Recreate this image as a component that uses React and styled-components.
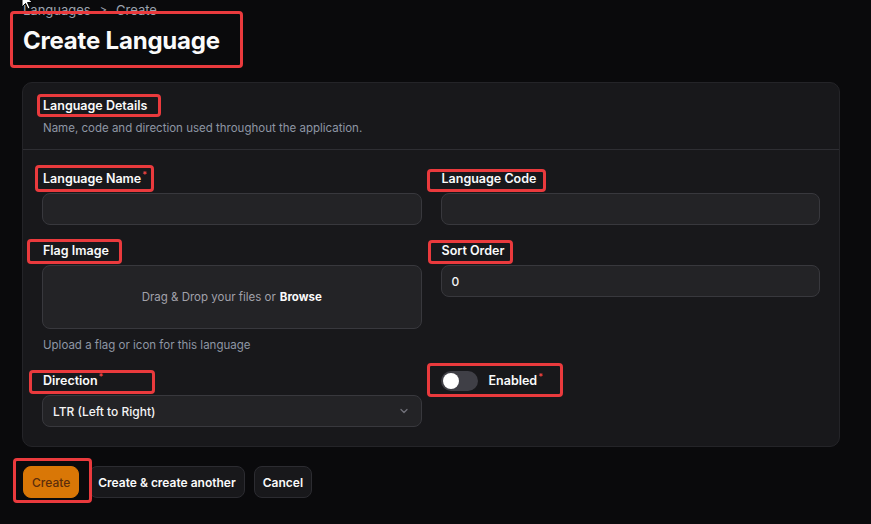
import React from 'react'
import styled, { createGlobalStyle } from 'styled-components'

const GlobalStyle = createGlobalStyle`
  html {
    overflow: hidden;
  }
  body {
    margin: 0;
    background: #0a0a0c;
    font-family: Inter, "Liberation Sans", sans-serif;
    color: #fafafa;
  }
`

const Page = styled.div`
  position: relative;
  padding: 0 31px 30px 22px;
`

const Cursor = styled.svg`
  position: absolute;
  left: 21px;
  top: -7px;
`

const Crumbs = styled.div`
  display: flex;
  align-items: center;
  gap: 9px;
  margin-left: 1px;
  height: 22px;
  margin-top: -1px;
  font-size: 13px;
  color: #9ca3af;
`

const Mark = styled.span`
  position: relative;
  display: inline-flex;
  &::after {
    content: '';
    position: absolute;
    top: ${p => p.$t}px;
    right: ${p => p.$r}px;
    bottom: ${p => p.$b}px;
    left: ${p => p.$l}px;
    border: 3px solid #ea3a3d;
    border-radius: 4px;
    pointer-events: none;
  }
`

const Title = styled.h1`
  margin: 5px 0 0 1px;
  font-size: 24px;
  line-height: 30px;
  font-weight: 700;
  letter-spacing: -0.2px;
`

const Card = styled.section`
  margin-top: 26px;
  background: #18181b;
  border: 1px solid #242428;
  border-radius: 10px;
`

const CardHead = styled.div`
  padding: 13px 20px 12px;
  border-bottom: 1px solid #2e2e33;
`

const CardTitle = styled.h2`
  margin: 0;
  font-size: 12.5px;
  line-height: 20px;
  font-weight: 600;
`

const Sub = styled.p`
  margin: 3px 0 0;
  font-size: 11.5px;
  line-height: 18px;
  color: #8e96a4;
`

const Grid = styled.div`
  display: grid;
  grid-template-columns: 1fr 1fr;
  column-gap: 19px;
  row-gap: 16px;
  padding: 19px 19px 19px 19px;
`

const Field = styled.div`
  display: flex;
  flex-direction: column;
  align-items: ${p => (p.$inline ? 'flex-start' : 'stretch')};
  gap: 4px;
`

const Label = styled.label`
  font-size: 12.5px;
  line-height: 20px;
  font-weight: 600;
  color: #fafafa;
  align-self: flex-start;
  margin-left: 1px;
`

const Req = styled.sup`
  color: #ef4444;
  font-size: 9px;
  margin-left: 1px;
  vertical-align: top;
  line-height: 12px;
`

const Input = styled.div`
  height: 30px;
  background: #232326;
  border: 1px solid #38383d;
  border-radius: 8px;
  display: flex;
  align-items: center;
  justify-content: space-between;
  padding: 0 11px 0 10px;
  font-size: 12px;
  font-weight: 500;
  color: #f4f4f5;
`

const Drop = styled.div`
  height: 62px;
  background: #232326;
  border: 1px solid #38383d;
  border-radius: 8px;
  display: flex;
  align-items: center;
  justify-content: center;
  font-size: 11.5px;
  color: #a1a1aa;
  b { color: #fafafa; font-weight: 700; margin-left: 4px; }
`

const Help = styled.div`
  margin-top: 2px;
  font-size: 11.5px;
  line-height: 20px;
  color: #8e96a4;
  margin-left: 1px;
`

const ToggleRow = styled.div`
  display: flex;
  align-items: center;
  gap: 10px;
  height: 20px;
`

const Track = styled.span`
  width: 37px;
  height: 20px;
  border-radius: 10px;
  background: #3f3f46;
  display: flex;
  align-items: center;
  padding: 2px;
  box-sizing: border-box;
  &::before {
    content: '';
    width: 16px;
    height: 16px;
    border-radius: 50%;
    background: #fff;
  }
`

const Actions = styled.div`
  display: flex;
  align-items: center;
  gap: 9px;
  margin: 19px 0 0 1px;
`

const Button = styled.button`
  height: 32px;
  padding: 0 ${p => (p.$primary ? 8 : 8)}px;
  border-radius: 8px;
  font-family: inherit;
  font-size: 12px;
  font-weight: ${p => (p.$primary ? 500 : 600)};
  background: ${p => (p.$primary ? '#d97706' : '#18181b')};
  color: ${p => (p.$primary ? '#5c2d0b' : '#fafafa')};
  border: 1px solid ${p => (p.$primary ? '#d97706' : '#2c2c31')};
  margin-right: ${p => (p.$primary ? 1 : 0)}px;
`

export default function App() {
  return (
    <Page>
      <GlobalStyle />
      <Crumbs>
        <span>Languages</span>
        <span style={{ fontSize: 11 }}>&gt;</span>
        <span>Create</span>
      </Crumbs>
      <Title>
        <Mark $t={-15} $r={-23} $b={-12} $l={-13}>Create Language</Mark>
      </Title>
      <Card>
        <CardHead>
          <CardTitle>
            <Mark $t={-2} $r={-14} $b={-1} $l={-6}>Language Details</Mark>
          </CardTitle>
          <Sub>Name, code and direction used throughout the application.</Sub>
        </CardHead>
        <Grid>
          <Field>
            <Label><Mark $t={-4} $r={-7} $b={-3} $l={-8}>Language Name<Req>*</Req></Mark></Label>
            <Input />
          </Field>
          <Field>
            <Label><Mark $t={0} $r={-10} $b={-3} $l={-15}>Language Code</Mark></Label>
            <Input />
          </Field>
          <Field>
            <Label><Mark $t={-2} $r={-13} $b={-3} $l={-16}>Flag Image</Mark></Label>
            <Drop>Drag &amp; Drop your files or<b>Browse</b></Drop>
            <Help>Upload a flag or icon for this language</Help>
          </Field>
          <Field>
            <Label><Mark $t={-1} $r={-9} $b={-3} $l={-14}>Sort Order</Mark></Label>
            <Input>0</Input>
          </Field>
          <Field>
            <Label><Mark $t={-1} $r={-52} $b={-3} $l={-14}>Direction<Req>*</Req></Mark></Label>
            <Input>
              LTR (Left to Right)
              <svg width="12" height="12" viewBox="0 0 24 24" fill="none" stroke="#71717a" strokeWidth="2.5" strokeLinecap="round" strokeLinejoin="round">
                <path d="m6 9 6 6 6-6" />
              </svg>
            </Input>
          </Field>
          <Field $inline>
            <Mark $t={-8} $r={-20} $b={-6} $l={-14}>
              <ToggleRow>
                <Track />
                <Label as="span">Enabled<Req>*</Req></Label>
              </ToggleRow>
            </Mark>
          </Field>
        </Grid>
      </Card>
      <Actions>
        <Mark $t={-8} $r={-12} $b={-5} $l={-10}>
          <Button $primary>Create</Button>
        </Mark>
        <Button>Create &amp; create another</Button>
        <Button>Cancel</Button>
      </Actions>
      <Cursor width="14" height="20" viewBox="0 0 14 20">
        <path d="M1 1 L1 15 L4.5 11.5 L7 17 L9 16 L6.5 10.5 L11.5 10.5 Z" fill="#fff" stroke="#000" strokeWidth="1" />
      </Cursor>
    </Page>
  )
}
